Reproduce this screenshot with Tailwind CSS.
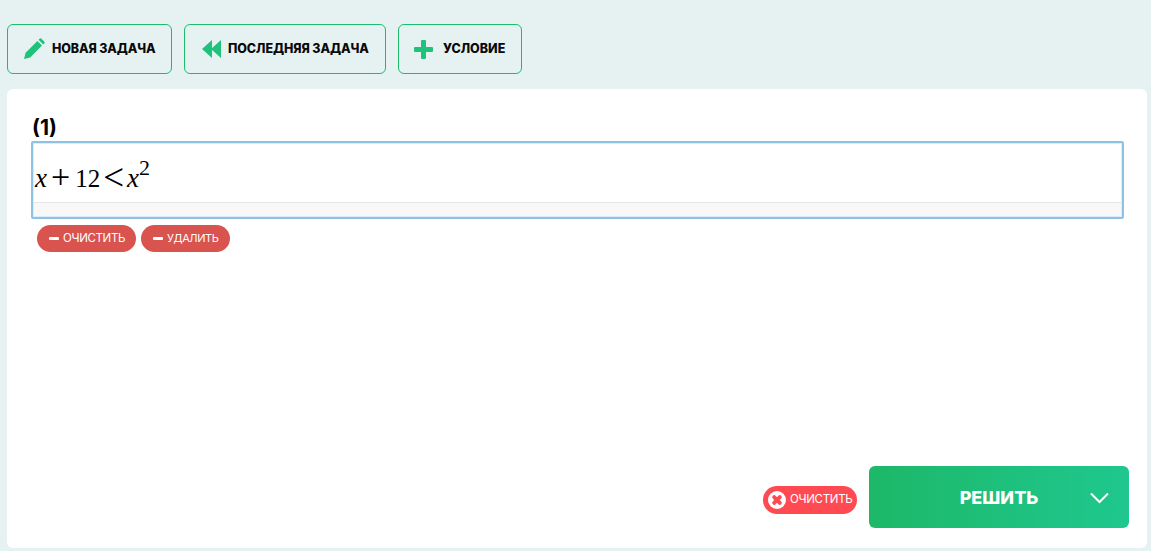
<!DOCTYPE html>
<html lang="ru">
<head>
    <meta charset="UTF-8">
    <title>Решить задачу</title>
    <script src="https://cdn.jsdelivr.net/npm/@tailwindcss/browser@4"></script>
</head>
<body class="bg-[#e6f2f1] h-[551px] overflow-hidden font-['Inter','Noto_Sans',sans-serif]">
    <!-- Top buttons -->
    <div class="flex gap-3 pt-6 pl-[7px]">
        <button class="flex items-center h-[50px] w-[165px] pl-[15px] border border-[#1dbb70] rounded-md text-[12.5px] font-extrabold text-[#0a0a0a] tracking-[-0.12px]">
            <svg class="w-[22px] h-[22px] mr-[7px]" viewBox="0 0 22 22"><path fill="#1fc27a" d="M1 21l1.6-6.2L14.4 3l4.6 4.6L7.2 19.4zM15.6 1.8l1.2-1.2a1 1 0 0 1 1.4 0l3.2 3.2a1 1 0 0 1 0 1.4l-1.2 1.2z"/></svg>
            НОВАЯ ЗАДАЧА
        </button>
        <button class="flex items-center h-[50px] w-[202px] pl-[17px] border border-[#1dbb70] rounded-md text-[12.5px] font-extrabold text-[#0a0a0a] tracking-[-0.08px]">
            <svg class="w-[19px] h-[18px] mr-[7px]" viewBox="0 0 19 18"><path fill="#1fc27a" d="M0 9l10-9v18zM9 9l10-9v18z"/></svg>
            ПОСЛЕДНЯЯ ЗАДАЧА
        </button>
        <button class="flex items-center h-[50px] w-[124px] pl-[15px] border border-[#1dbb70] rounded-md text-[12.5px] font-extrabold text-[#0a0a0a]">
            <svg class="w-[19px] h-[19px] mr-[10px]" viewBox="0 0 19 19"><path fill="#1fc27a" d="M7 1a1 1 0 0 1 1-1h3a1 1 0 0 1 1 1v6h6a1 1 0 0 1 1 1v3a1 1 0 0 1-1 1h-6v6a1 1 0 0 1-1 1H8a1 1 0 0 1-1-1v-6H1a1 1 0 0 1-1-1V8a1 1 0 0 1 1-1h6z"/></svg>
            УСЛОВИЕ
        </button>
    </div>

    <!-- Main card -->
    <div class="relative mt-[15px] ml-[7px] w-[1140px] h-[459px] bg-white rounded-md pt-[25px] px-6">
        <div class="text-[21px] leading-[27px] font-bold text-black pl-[1px]">(1)</div>
        <div class="w-[1093px] h-[78px] border-2 border-[#8fc2e2] rounded-[2px] bg-[#f8f8f8] shadow-[inset_0_0_0_1px_#dcecf8]">
            <div class="h-[59px] mx-[1px] mt-[1px] bg-white border-b border-[#e6e6e6] flex items-baseline pt-[11px] font-['Liberation_Serif',serif] text-[27px] leading-[40px] text-black whitespace-nowrap">
                <i class="ml-px">x</i>
                <span class="ml-[4px] text-[34px] leading-[40px] relative top-[1px]">+</span>
                <span class="ml-[5px] text-[25px]">12</span>
                <span class="ml-[3px] text-[37px] leading-[40px] relative top-[3px]">&lt;</span>
                <i class="ml-[3px]">x</i>
                <span class="text-[22px] relative -top-[12px]">2</span>
            </div>
        </div>
        <div class="flex gap-[5px] mt-[6px] ml-[6px]">
            <button class="flex items-center h-[27px] w-[99px] pl-3 bg-[#d9534f] rounded-full text-white text-[11.5px] tracking-[-0.35px]">
                <span class="w-[10px] h-[3px] bg-white rounded-[1px] mr-[4px]"></span>ОЧИСТИТЬ
            </button>
            <button class="flex items-center h-[27px] w-[89px] pl-3 bg-[#d9534f] rounded-full text-white text-[11px] tracking-[-0.4px]">
                <span class="w-[10px] h-[3px] bg-white rounded-[1px] mr-[4px]"></span>УДАЛИТЬ
            </button>
        </div>
        <!-- Bottom actions -->
        <div class="absolute right-[18px] bottom-[20px] flex items-center gap-3">
            <button class="flex items-center h-[28px] w-[94px] mt-[6px] pl-[5px] bg-[#ff4a52] rounded-full text-white text-[11.5px] tracking-[-0.3px]">
                <svg class="w-[18px] h-[18px] mr-[4px]" viewBox="0 0 18 18"><circle cx="9" cy="9" r="9" fill="#fff"/><path stroke="#ff4a52" stroke-width="4" stroke-linecap="round" d="M6.2 6.2l5.6 5.6M11.8 6.2l-5.6 5.6"/></svg>
                ОЧИСТИТЬ
            </button>
            <button class="relative flex items-center justify-center h-[62px] w-[260px] rounded-md bg-linear-to-r from-[#1db868] to-[#1fc78e] text-white text-[18px] font-extrabold">
                РЕШИТЬ
                <svg class="absolute right-[20px] top-[26px] w-[19px] h-[12px]" viewBox="0 0 19 12"><path fill="none" stroke="#fff" stroke-width="2" d="M1 1.5l8.5 8.5L18 1.5"/></svg>
            </button>
        </div>
    </div>
</body>
</html>
